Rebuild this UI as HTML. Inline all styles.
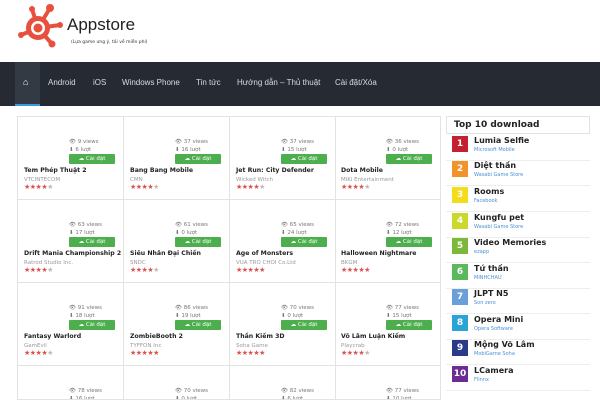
<!DOCTYPE html>
<html><head><meta charset="utf-8"><style>
*{margin:0;padding:0;box-sizing:border-box}
html,body{width:600px;height:400px;overflow:hidden}
body{background:#fff;font-family:"DejaVu Sans","Liberation Sans",sans-serif;position:relative}
.nav{position:absolute;left:0;top:62px;width:600px;height:44px;background:#262b33}
.nav span{position:absolute;top:16px;color:#d8dbe0;font-size:8px;font-family:"Liberation Sans",sans-serif;white-space:nowrap}
.home{position:absolute;left:15px;top:0;width:25px;height:44px;background:#333a44;border-bottom:2px solid #3a9bd8}
.grid{position:absolute;left:17px;top:116px;width:424px;height:284px;border-left:1px solid #e3e3e3;border-top:1px solid #e3e3e3;overflow:hidden}
.c{position:absolute;width:106px;height:83px;border-right:1px solid #e3e3e3;border-bottom:1px solid #e3e3e3;overflow:hidden}
.v{position:absolute;left:51px;top:22px;font-size:5.5px;color:#777;line-height:7.5px}
.b{position:absolute;left:51px;top:37px;width:46px;height:10px;background:#4cae4c;border-radius:1px;color:#fff;font-size:5.5px;line-height:10px;text-align:center}
.t{position:absolute;left:6px;top:50px;font-size:6.2px;font-weight:bold;color:#222;white-space:nowrap}
.p{position:absolute;left:6px;top:60px;font-size:5.5px;color:#999;white-space:nowrap}
.s{position:absolute;left:6px;top:66px;font-size:7px;color:#d9534f;letter-spacing:-0.5px}
.s i{color:#bbb;font-style:normal}
.side{position:absolute;left:446px;top:116px;width:144px;height:18px;border:1px solid #e3e3e3;font-size:9px;font-weight:bold;color:#222;padding:3px 7px}
.it{position:absolute;left:446px;width:144px;height:25px;border-bottom:1px solid #eee}
.n{position:absolute;left:6px;top:0;width:16px;height:16px;color:#fff;font-size:9px;font-weight:bold;text-align:center;line-height:16px}
.nm{position:absolute;left:28px;top:0;font-size:8px;font-weight:bold;color:#222;white-space:nowrap}
.sb{position:absolute;left:28px;top:11px;font-size:5px;color:#4a90d9;white-space:nowrap}
</style></head><body>
<svg style="position:absolute;left:18px;top:4px" width="46" height="44" viewBox="0 0 46 44">
<g fill="#e8503e"><circle cx="20" cy="24" r="12"/><circle cx="32" cy="4" r="4"/><circle cx="3" cy="31" r="3"/><circle cx="34" cy="40" r="3.5"/><circle cx="14" cy="5" r="3"/><circle cx="42" cy="21" r="3"/>
<path d="M20 24L32 4M20 24L3 31M20 24L34 40M20 24L14 5M20 24L42 21" stroke="#e8503e" stroke-width="4"/></g>
<circle cx="20" cy="24" r="7" fill="#fff"/><circle cx="20" cy="24" r="4.5" fill="#e8503e"/></svg>
<div style="position:absolute;left:67px;top:15px;font-size:17px;font-family:'Liberation Sans',sans-serif;color:#222">Appstore</div>
<div style="position:absolute;left:71px;top:40px;font-size:4.5px;color:#333">(Lựa game ưng ý, tải về miễn phí)</div>
<div class="nav"><div class="home"><span style="left:8px;top:15px;color:#fff;font-size:9px">⌂</span></div>
<span style="left:48px">Android</span><span style="left:93px">iOS</span><span style="left:122px">Windows Phone</span><span style="left:196px">Tin tức</span><span style="left:237px">Hướng dẫn – Thủ thuật</span><span style="left:335px">Cài đặt/Xóa</span></div>
<div class="grid">
<div class="c" style="left:0;top:0"><div class="v">👁 9 views<br>⬇ 6 lượt</div><div class="b">☁ Cài đặt</div><div class="t">Tem Phép Thuật 2</div><div class="p">VTCINTECOM</div><div class="s">★★★★<i>★</i></div></div>
<div class="c" style="left:106px;top:0"><div class="v">👁 37 views<br>⬇ 16 lượt</div><div class="b">☁ Cài đặt</div><div class="t">Bang Bang Mobile</div><div class="p">CMN</div><div class="s">★★★★<i>★</i></div></div>
<div class="c" style="left:212px;top:0"><div class="v">👁 37 views<br>⬇ 15 lượt</div><div class="b">☁ Cài đặt</div><div class="t">Jet Run: City Defender</div><div class="p">Wicked Witch</div><div class="s">★★★★<i>★</i></div></div>
<div class="c" style="left:317px;top:0"><div class="v">👁 36 views<br>⬇ 0 lượt</div><div class="b">☁ Cài đặt</div><div class="t">Dota Mobile</div><div class="p">MiKi Entertainment</div><div class="s">★★★★<i>★</i></div></div>
<div class="c" style="left:0;top:83px"><div class="v">👁 63 views<br>⬇ 17 lượt</div><div class="b">☁ Cài đặt</div><div class="t">Drift Mania Championship 2</div><div class="p">Ratrod Studio Inc.</div><div class="s">★★★★<i>★</i></div></div>
<div class="c" style="left:106px;top:83px"><div class="v">👁 61 views<br>⬇ 0 lượt</div><div class="b">☁ Cài đặt</div><div class="t">Siêu Nhân Đại Chiến</div><div class="p">SNDC</div><div class="s">★★★★<i>★</i></div></div>
<div class="c" style="left:212px;top:83px"><div class="v">👁 65 views<br>⬇ 24 lượt</div><div class="b">☁ Cài đặt</div><div class="t">Age of Monsters</div><div class="p">VUA TRO CHOI Co.Ltd</div><div class="s">★★★★★</div></div>
<div class="c" style="left:317px;top:83px"><div class="v">👁 72 views<br>⬇ 12 lượt</div><div class="b">☁ Cài đặt</div><div class="t">Halloween Nightmare</div><div class="p">BKGM</div><div class="s">★★★★★</div></div>
<div class="c" style="left:0;top:166px"><div class="v">👁 91 views<br>⬇ 18 lượt</div><div class="b">☁ Cài đặt</div><div class="t">Fantasy Warlord</div><div class="p">GamEvil</div><div class="s">★★★★<i>★</i></div></div>
<div class="c" style="left:106px;top:166px"><div class="v">👁 86 views<br>⬇ 19 lượt</div><div class="b">☁ Cài đặt</div><div class="t">ZombieBooth 2</div><div class="p">TYFFON Inc</div><div class="s">★★★★★</div></div>
<div class="c" style="left:212px;top:166px"><div class="v">👁 70 views<br>⬇ 0 lượt</div><div class="b">☁ Cài đặt</div><div class="t">Thần Kiếm 3D</div><div class="p">Soha Game</div><div class="s">★★★★★</div></div>
<div class="c" style="left:317px;top:166px"><div class="v">👁 77 views<br>⬇ 15 lượt</div><div class="b">☁ Cài đặt</div><div class="t">Võ Lâm Luận Kiếm</div><div class="p">Playcrab</div><div class="s">★★★★<i>★</i></div></div>
<div class="c" style="left:0;top:249px;height:34px"><div class="v">👁 78 views<br>⬇ 16 lượt</div></div>
<div class="c" style="left:106px;top:249px;height:34px"><div class="v">👁 70 views<br>⬇ 0 lượt</div></div>
<div class="c" style="left:212px;top:249px;height:34px"><div class="v">👁 82 views<br>⬇ 6 lượt</div></div>
<div class="c" style="left:317px;top:249px;height:34px"><div class="v">👁 77 views<br>⬇ 10 lượt</div></div>
</div>
<div class="side">Top 10 download</div>
<div class="it" style="top:136px"><div class="n" style="background:#c4202f">1</div><div class="nm">Lumia Selfie</div><div class="sb">Microsoft Mobile</div></div>
<div class="it" style="top:161px"><div class="n" style="background:#f0932b">2</div><div class="nm">Diệt thần</div><div class="sb">Wasabi Game Store</div></div>
<div class="it" style="top:187px"><div class="n" style="background:#f2dc1c">3</div><div class="nm">Rooms</div><div class="sb">Facebook</div></div>
<div class="it" style="top:213px"><div class="n" style="background:#cad92c">4</div><div class="nm">Kungfu pet</div><div class="sb">Wasabi Game Store</div></div>
<div class="it" style="top:238px"><div class="n" style="background:#7cb83a">5</div><div class="nm">Video Memories</div><div class="sb">ezapp</div></div>
<div class="it" style="top:264px"><div class="n" style="background:#5cb85c">6</div><div class="nm">Tứ thần</div><div class="sb">MINHCHAU</div></div>
<div class="it" style="top:289px"><div class="n" style="background:#6a9fd8">7</div><div class="nm">JLPT N5</div><div class="sb">Son zero</div></div>
<div class="it" style="top:315px"><div class="n" style="background:#2aa3d6">8</div><div class="nm">Opera Mini</div><div class="sb">Opera Software</div></div>
<div class="it" style="top:340px"><div class="n" style="background:#2c3a8a">9</div><div class="nm">Mộng Võ Lâm</div><div class="sb">MobiGame Soha</div></div>
<div class="it" style="top:366px"><div class="n" style="background:#6a2c90">10</div><div class="nm">LCamera</div><div class="sb">Flinnx</div></div>
</body></html>
